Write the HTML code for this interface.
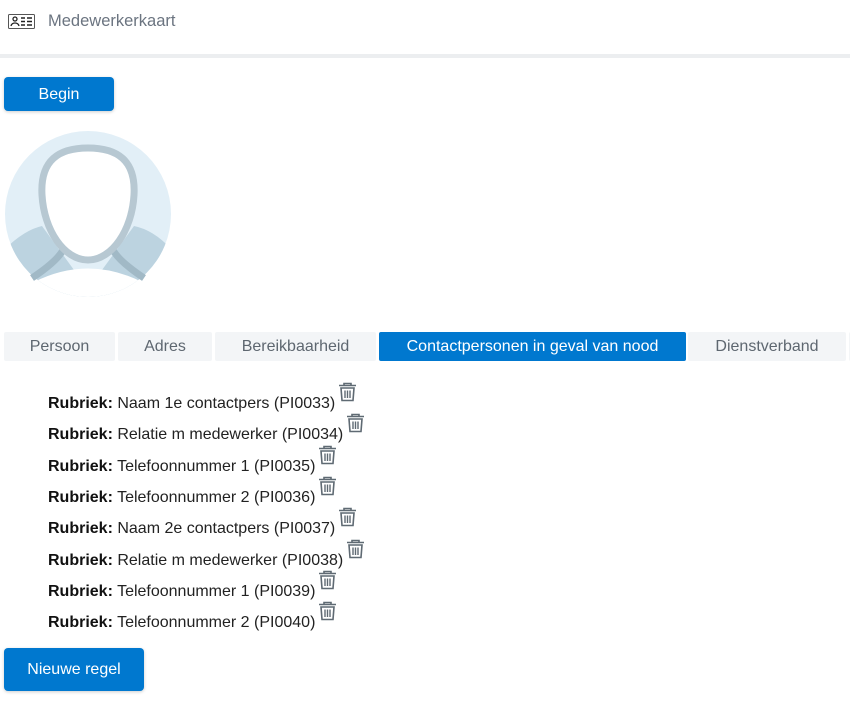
<!DOCTYPE html>
<html><head><meta charset="utf-8"><style>
body{margin:0;width:850px;height:711px;background:#fff;font-family:"Liberation Sans",sans-serif;position:relative;overflow:hidden}
.hdr{position:absolute;left:0;top:0;width:850px;height:54px;border-bottom:4px solid #eceef0}
.hdr span{position:absolute;left:48px;top:12px;font-size:16.5px;color:#6b7480}
.btn{position:absolute;background:#0078cf;color:#fff;border-radius:4px;font-size:16px;text-align:center;box-shadow:0 1px 3px rgba(0,0,0,.2)}
.tab{position:absolute;top:332px;height:29px;line-height:30px;background:#f3f5f7;color:#5e6770;font-size:16px;text-align:center;border-radius:2px}
.tab.a{background:#0078cf;color:#fff}
.row{position:absolute;left:48px;font-size:16px;color:#222;white-space:nowrap}
.row b{color:#111}
.row svg{vertical-align:6px;margin-left:3px}
</style></head><body>
<div class="hdr">
<svg style="position:absolute;left:8px;top:14px" width="27" height="15" viewBox="0 0 27 15"><rect x="0.5" y="0.5" width="26" height="14" fill="none" stroke="#555" rx="1"/><circle cx="7" cy="5" r="2" fill="none" stroke="#222" stroke-width="1.3"/><path d="M3 12c1-4 7-4 8 0" fill="none" stroke="#222" stroke-width="1.3"/><path d="M13 4h4M13 7.5h4M13 11h4M19 4h5M19 7.5h5M19 11h5" stroke="#222" stroke-width="1.4"/></svg>
<span>Medewerkerkaart</span></div>
<div class="btn" style="left:4px;top:77px;width:110px;height:34px;line-height:36px">Begin</div>
<svg style="position:absolute;left:4px;top:130px" width="168" height="168" viewBox="0 0 168 168">
<defs><clipPath id="c"><circle cx="84" cy="84" r="83"/></clipPath></defs>
<circle cx="84" cy="84" r="83" fill="#e2eff7"/>
<g clip-path="url(#c)">
<path d="M0 120 Q20 100 38 96 L70 140 L98 140 L130 96 Q150 100 168 120 L168 168 L0 168Z" fill="#bcd3e0"/>
<path d="M30 152 Q84 125 138 152 L150 168 L18 168Z" fill="#fff"/>
</g>
<path d="M28 148 Q55 130 60 118" stroke="#a1b9c6" stroke-width="7" fill="none"/>
<path d="M140 148 Q113 130 108 118" stroke="#a1b9c6" stroke-width="7" fill="none"/>
<path d="M84 18 C55 18 36 30 38 65 C40 100 60 130 84 130 C108 130 128 100 130 65 C132 30 113 18 84 18Z" fill="#fff" stroke="#b7c8d2" stroke-width="7"/>
</svg>
<div class="tab" style="left:4px;width:111px">Persoon</div>
<div class="tab" style="left:118px;width:94px">Adres</div>
<div class="tab" style="left:215px;width:161px">Bereikbaarheid</div>
<div class="tab a" style="left:379px;width:307px">Contactpersonen in geval van nood</div>
<div class="tab" style="left:688px;width:158px">Dienstverband</div>
<div class="tab" style="left:849px;width:10px"></div>
<div class="row" style="top:382px"><b>Rubriek:</b> Naam 1e contactpers (PI0033)<svg width="19" height="20" viewBox="0 0 19 20"><path d="M6 3V1.5h7V3M1 3.5h17M3 6h13l-1 12.5H4Z" fill="none" stroke="#5f6a73" stroke-width="1.6"/><path d="M7 8.5v7.5M9.5 8.5v7.5M12 8.5v7.5" stroke="#5f6a73" stroke-width="1.4"/></svg></div>
<div class="row" style="top:413px"><b>Rubriek:</b> Relatie m medewerker (PI0034)<svg width="19" height="20" viewBox="0 0 19 20"><path d="M6 3V1.5h7V3M1 3.5h17M3 6h13l-1 12.5H4Z" fill="none" stroke="#5f6a73" stroke-width="1.6"/><path d="M7 8.5v7.5M9.5 8.5v7.5M12 8.5v7.5" stroke="#5f6a73" stroke-width="1.4"/></svg></div>
<div class="row" style="top:445px"><b>Rubriek:</b> Telefoonnummer 1 (PI0035)<svg width="19" height="20" viewBox="0 0 19 20"><path d="M6 3V1.5h7V3M1 3.5h17M3 6h13l-1 12.5H4Z" fill="none" stroke="#5f6a73" stroke-width="1.6"/><path d="M7 8.5v7.5M9.5 8.5v7.5M12 8.5v7.5" stroke="#5f6a73" stroke-width="1.4"/></svg></div>
<div class="row" style="top:476px"><b>Rubriek:</b> Telefoonnummer 2 (PI0036)<svg width="19" height="20" viewBox="0 0 19 20"><path d="M6 3V1.5h7V3M1 3.5h17M3 6h13l-1 12.5H4Z" fill="none" stroke="#5f6a73" stroke-width="1.6"/><path d="M7 8.5v7.5M9.5 8.5v7.5M12 8.5v7.5" stroke="#5f6a73" stroke-width="1.4"/></svg></div>
<div class="row" style="top:507px"><b>Rubriek:</b> Naam 2e contactpers (PI0037)<svg width="19" height="20" viewBox="0 0 19 20"><path d="M6 3V1.5h7V3M1 3.5h17M3 6h13l-1 12.5H4Z" fill="none" stroke="#5f6a73" stroke-width="1.6"/><path d="M7 8.5v7.5M9.5 8.5v7.5M12 8.5v7.5" stroke="#5f6a73" stroke-width="1.4"/></svg></div>
<div class="row" style="top:539px"><b>Rubriek:</b> Relatie m medewerker (PI0038)<svg width="19" height="20" viewBox="0 0 19 20"><path d="M6 3V1.5h7V3M1 3.5h17M3 6h13l-1 12.5H4Z" fill="none" stroke="#5f6a73" stroke-width="1.6"/><path d="M7 8.5v7.5M9.5 8.5v7.5M12 8.5v7.5" stroke="#5f6a73" stroke-width="1.4"/></svg></div>
<div class="row" style="top:570px"><b>Rubriek:</b> Telefoonnummer 1 (PI0039)<svg width="19" height="20" viewBox="0 0 19 20"><path d="M6 3V1.5h7V3M1 3.5h17M3 6h13l-1 12.5H4Z" fill="none" stroke="#5f6a73" stroke-width="1.6"/><path d="M7 8.5v7.5M9.5 8.5v7.5M12 8.5v7.5" stroke="#5f6a73" stroke-width="1.4"/></svg></div>
<div class="row" style="top:601px"><b>Rubriek:</b> Telefoonnummer 2 (PI0040)<svg width="19" height="20" viewBox="0 0 19 20"><path d="M6 3V1.5h7V3M1 3.5h17M3 6h13l-1 12.5H4Z" fill="none" stroke="#5f6a73" stroke-width="1.6"/><path d="M7 8.5v7.5M9.5 8.5v7.5M12 8.5v7.5" stroke="#5f6a73" stroke-width="1.4"/></svg></div>
<div class="btn" style="left:4px;top:648px;width:140px;height:43px;line-height:43px">Nieuwe regel</div>
</body></html>
